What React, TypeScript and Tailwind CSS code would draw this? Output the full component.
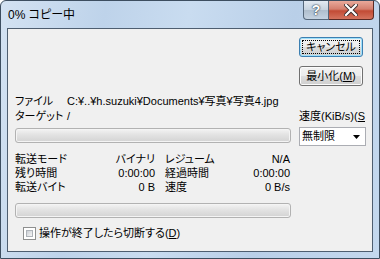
const font = { fontFamily: '"Liberation Sans", "Noto Sans CJK JP", sans-serif' }

function VistaButton({ label, focused }: { label: React.ReactNode; focused?: boolean }) {
  return (
    <div
      className={
        'w-[64px] h-[20px] rounded-[3px] border flex items-center justify-center ' +
        (focused
          ? 'border-[#3c7fb1] shadow-[inset_0_0_0_1px_#9fe0fb]'
          : 'border-[#707070] shadow-[inset_0_0_0_1px_#fbfbfb]')
      }
      style={{
        background: 'linear-gradient(#f2f2f2 0%, #ebebeb 50%, #dddddd 50%, #cfcfcf 100%)',
      }}
    >
      <div
        className={
          'w-[58px] h-[14px] flex items-center justify-center whitespace-nowrap text-[11px] leading-none text-black ' +
          (focused ? 'border border-dotted border-black' : '')
        }
      >
        {label}
      </div>
    </div>
  )
}

function ProgressBar() {
  return (
    <div
      className="h-[15px] w-[276px] rounded-[3px] border border-[#b2b2b2] shadow-[inset_0_0_0_1px_#f4f4f4]"
      style={{ background: 'linear-gradient(#f4f4f4 0%, #e4e4e4 40%, #d3d3d3 100%)' }}
    />
  )
}

function StatCell({ label, value, indent }: { label: string; value: string; indent?: boolean }) {
  return (
    <div className={'flex justify-between whitespace-nowrap ' + (indent ? 'pl-[10px]' : '')}>
      <span>{label}</span>
      <span>{value}</span>
    </div>
  )
}

export default function App() {
  return (
    <div
      className="w-[380px] h-[259px] overflow-hidden rounded-t-[6px] border border-[#3d4e60] flex flex-col [font-feature-settings:'palt']"
      style={{
        ...font,
        background:
          'linear-gradient(100deg, #d3e2f2 0%, #bed3ea 25%, #c9dcf0 45%, #b9cfe8 70%, #c4d8ee 100%)',
      }}
    >
      {/* title bar */}
      <div className="h-[27px] flex items-start justify-between">
        <div className="pl-[7px] pt-[6px] text-[12px] leading-[16px] text-black">0% コピー中</div>
        <div className="flex mr-[5px]">
          <div
            className="w-[26px] h-[19px] border border-[#55677a] border-t-0 rounded-bl-[4px] flex items-center justify-center text-white font-bold text-[14px] leading-none"
            style={{
              background: 'linear-gradient(#e3eaf2 0%, #c6d2de 50%, #aebdcc 50%, #c5d3e2 100%)',
              textShadow: '0 0 2px #203040, 0 0 1px #203040',
            }}
          >
            ?
          </div>
          <div
            className="w-[45px] h-[19px] border border-[#5a2a24] border-t-0 border-l-0 rounded-br-[4px] flex items-center justify-center"
            style={{ background: 'linear-gradient(#e9a99b 0%, #d47f6e 45%, #c24b35 55%, #d4735e 100%)' }}
          >
            <svg width="14" height="12" viewBox="0 0 14 12">
              <path
                d="M2 1 L12 11 M12 1 L2 11"
                stroke="#3a2a2a"
                strokeWidth="4"
                fill="none"
                strokeLinecap="square"
              />
              <path
                d="M2 1 L12 11 M12 1 L2 11"
                stroke="#ffffff"
                strokeWidth="2.2"
                fill="none"
                strokeLinecap="square"
              />
            </svg>
          </div>
        </div>
      </div>

      {/* client area */}
      <div className="mx-[6px] h-[224px] border border-[#4e5e70] bg-[#f0f0f0] flex flex-col text-[11px] text-black">
        <div className="flex flex-1">
          {/* left column */}
          <div className="pl-[7px] pt-[65px] w-[283px] shrink-0 flex flex-col">
            <div className="flex h-[15px] leading-[15px] whitespace-nowrap">
              <span className="w-[52px]">ファイル</span>
              <span>C:¥..¥h.suzuki¥Documents¥写真¥写真4.jpg</span>
            </div>
            <div className="flex h-[15px] leading-[15px]">
              <span className="w-[52px]">ターゲット</span>
              <span>/</span>
            </div>
            <div className="mt-[4px]">
              <ProgressBar />
            </div>
            <div className="mt-[9px] grid grid-cols-[140px_135px] leading-[14px]">
              <StatCell label="転送モード" value="バイナリ" />
              <StatCell label="レジューム" value="N/A" indent />
              <StatCell label="残り時間" value="0:00:00" />
              <StatCell label="経過時間" value="0:00:00" indent />
              <StatCell label="転送バイト" value="0 B" />
              <StatCell label="速度" value="0 B/s" indent />
            </div>
            <div className="mt-[9px]">
              <ProgressBar />
            </div>
          </div>

          {/* right column */}
          <div className="pl-[8px] pt-[8px] flex flex-col">
            <VistaButton focused label="キャンセル" />
            <div className="mt-[9px]">
              <VistaButton
                label={
                  <span>
                    最小化(<span className="underline">M</span>)
                  </span>
                }
              />
            </div>
            <div className="mt-[23px] leading-[15px] whitespace-nowrap">
              速度(KiB/s)(<span className="underline">S</span>
            </div>
            <div className="mt-[3px] w-[67px] h-[19px] bg-white border border-[#abadb3] flex items-center justify-between pl-[2px] pr-[5px]">
              <span className="leading-none">無制限</span>
              <svg width="7" height="4" viewBox="0 0 7 4">
                <path d="M0 0 H7 L3.5 4 Z" fill="#000" />
              </svg>
            </div>
          </div>
        </div>

        {/* checkbox row */}
        <div className="flex items-center pl-[15px] pb-[10px] gap-[3px]">
          <div className="w-[13px] h-[13px] border border-[#8e8f8f] bg-white p-[2px]">
            <div
              className="w-full h-full border border-[#aeb3b9]"
              style={{ background: 'linear-gradient(135deg, #cbcfd5 0%, #f6f6f6 100%)' }}
            />
          </div>
          <span className="leading-[15px]">
            操作が終了したら切断する(<span className="underline">D</span>)
          </span>
        </div>
      </div>
    </div>
  )
}
